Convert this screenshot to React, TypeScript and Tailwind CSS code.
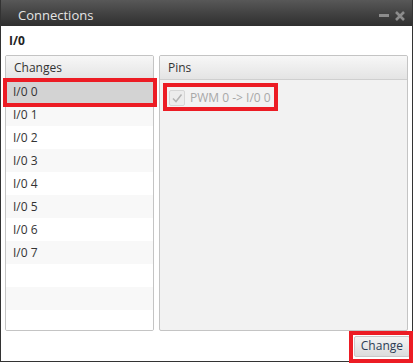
import React from "react";

const rows = ["I/0 0", "I/0 1", "I/0 2", "I/0 3", "I/0 4", "I/0 5", "I/0 6", "I/0 7", "", "", ""];

export default function App() {
  return (
    <div className="relative w-[416px] h-[363px] bg-white overflow-hidden text-[12px] text-[#333]" style={{ fontFamily: '"Open Sans", "Noto Sans", sans-serif' }}>
      <div className="w-[413px] h-[362px] border border-[#333] border-t-0 flex flex-col bg-white">
        {/* Title bar */}
        <div className="h-[26px] flex items-center justify-between pt-[5px] pl-[17px] pr-[7px] bg-gradient-to-b from-[#585858] to-[#2f2f2f]">
          <span className="text-[13px] text-[#e4e4e4]">Connections</span>
          <div className="flex items-center gap-[6px]">
            <div className="w-[10px] h-[3px] bg-[#8c8c8c]" />
            <svg width="10" height="10" viewBox="0 0 10 10">
              <path d="M1 1 L9 9 M9 1 L1 9" stroke="#8c8c8c" strokeWidth="2.6" />
            </svg>
          </div>
        </div>

        <div className="h-[29px] flex items-center pl-[8px] font-bold text-[12px] text-[#222]">I/0</div>

        <div className="flex gap-[5px] pl-[4px] pr-[4px] h-[276px]">
          {/* Changes panel */}
          <div className="w-[149px] border border-[#c4c4c4] rounded-[2px] flex flex-col overflow-hidden">
            <div className="h-[24px] shrink-0 flex items-center pl-[8px] border-b border-[#cfcfcf] bg-gradient-to-b from-[#f7f7f7] to-[#e4e4e4] text-[#333]">Changes</div>
            {rows.map((r, i) => (
              <div
                key={i}
                className={`h-[23px] shrink-0 flex items-center pl-[7px] text-[#333] ${i === 0 ? "bg-[#d3d3d3]" : i % 2 === 0 ? "bg-white" : "bg-[#f8f8f8]"}`}
              >
                {r}
              </div>
            ))}
          </div>

          {/* Pins panel */}
          <div className="flex-1 border border-[#c4c4c4] rounded-[2px] flex flex-col bg-[#f2f2f2] overflow-hidden">
            <div className="h-[24px] shrink-0 flex items-center pl-[8px] border-b border-[#cfcfcf] bg-gradient-to-b from-[#f7f7f7] to-[#e4e4e4] text-[#333]">Pins</div>
            <div className="flex items-center gap-[5px] pl-[9px] pt-[9px]">
              <div className="w-[16px] h-[16px] rounded-[2px] border border-[#d6d6d6] bg-[#ececec] flex items-center justify-center">
                <svg width="12" height="12" viewBox="0 0 12 12">
                  <path d="M2 6.5 L5 9.5 L10.5 2.5" fill="none" stroke="#b4b4b4" strokeWidth="1.5" />
                </svg>
              </div>
              <span className="text-[#a8a8a8]">PWM 0 -&gt; I/0 0</span>
            </div>
          </div>
        </div>

        <div className="flex-1 flex items-center justify-end pr-[2px]">
          <button className="h-[21px] px-[6px] rounded-[2px] border border-[#c8c8c8] bg-gradient-to-b from-[#f4f4f4] to-[#dcdcdc] text-[#2b3d55]">Change</button>
        </div>
      </div>

      {/* Annotation boxes */}
      <div className="absolute left-[3px] top-[78px] w-[154px] h-[29px] border-[4px] border-[#ec1c24]" />
      <div className="absolute left-[163px] top-[83px] w-[115px] h-[28px] border-[4px] border-[#ec1c24]" />
      <div className="absolute left-[349px] top-[331px] w-[64px] h-[32px] border-[4px] border-[#ec1c24]" />
    </div>
  );
}
